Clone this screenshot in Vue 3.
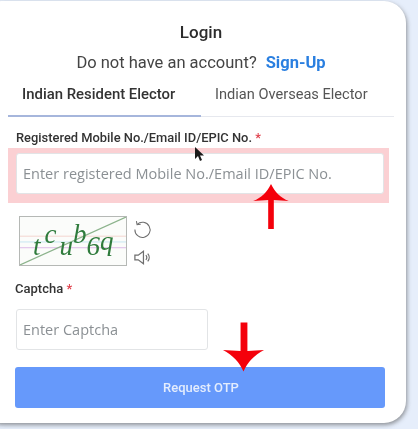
<script setup>
const captcha = [
  { ch: 't', cls: 'low gap-wide' },
  { ch: 'c', cls: 'high gap-mid' },
  { ch: 'u', cls: 'low' },
  { ch: 'b', cls: 'high' },
  { ch: '6', cls: 'low' },
  { ch: 'q', cls: 'mid' },
]
</script>

<template>
  <div class="page">
    <main class="card">
      <h1 class="title">Login</h1>
      <p class="signup">Do not have an account?<a class="link">Sign-Up</a></p>

      <div class="tabs">
        <div class="tab active">Indian Resident Elector</div>
        <div class="tab">Indian Overseas Elector</div>
      </div>

      <label class="label first">Registered Mobile No./Email ID/EPIC No. <span class="req">*</span></label>
      <div class="highlight">
        <div class="input wide">Enter registered Mobile No./Email ID/EPIC No.</div>
      </div>

      <div class="captcha-row">
        <div class="captcha">
          <svg class="captcha-lines" viewBox="0 0 108 50" preserveAspectRatio="none">
            <line x1="0" y1="20" x2="108" y2="20" stroke="#f3d4d0" />
            <line x1="0" y1="26" x2="108" y2="26" stroke="#c5e6f2" />
            <line x1="0" y1="32" x2="108" y2="32" stroke="#dcb9e6" />
            <line x1="0" y1="50" x2="108" y2="0" stroke="#8cb38c" stroke-width="1.2" />
          </svg>
          <span v-for="(l, i) in captcha" :key="i" class="glyph" :class="l.cls">{{ l.ch }}</span>
        </div>
        <div class="captcha-tools">
          <svg class="tool" viewBox="0 0 20 20" fill="none" stroke="#6e6e6e" stroke-width="1.1">
            <path d="M4.400 4.600A8 8 0 1 1 2 10" />
            <path d="M3.600 1.200 4.300 5l3.800-.5" />
          </svg>
          <svg class="tool" viewBox="0 0 20 20" fill="none" stroke="#6e6e6e" stroke-width="1.3">
            <path d="M2 7.500h3.500L11 3.500v13l-5.500-4H2z" />
            <path d="M13.500 7.500a3.500 3.500 0 0 1 0 5M15.500 6a6 6 0 0 1 0 8" />
          </svg>
        </div>
      </div>

      <label class="label second">Captcha <span class="req">*</span></label>
      <div class="input short">Enter Captcha</div>

      <button class="submit">Request OTP</button>
    </main>

    <svg class="pointer" viewBox="0 0 10 16">
      <path d="M1 1v12l3-3 2 5 2-1-2-4.500h4z" fill="#1a1a1a" />
    </svg>
    <svg class="arrow arrow-up" viewBox="0 0 40 48">
      <path d="M20 0 C24 8 30 15 39 18 L23 17 V48 H17 V17 L1 18 C10 15 16 8 20 0Z" fill="#f4000b" />
    </svg>
    <svg class="arrow arrow-down" viewBox="0 0 44 50">
      <path d="M19 0 H26 V29 L43 28 C33 33 26 41 22 50 C18 41 11 33 1 28 L19 29Z" fill="#f4000b" />
    </svg>
  </div>
</template>

<style>
html, body { margin: 0; background: #e6eefb; }
</style>

<style scoped>
.page {
  position: relative;
  width: 418px;
  height: 429px;
  overflow: hidden;
  background: #e6eefb;
  font-family: Roboto, "Liberation Sans", sans-serif;
}
.card {
  box-sizing: border-box;
  width: 426px;
  height: 422px;
  margin: 1px 0 0 -20px;
  padding: 22px 20px 0 35px;
  background: #fff;
  border-radius: 22px;
  box-shadow: 1px 2px 4px rgba(70, 70, 70, .55);
  filter: blur(.55px);
  display: flex;
  flex-direction: column;
  align-items: flex-start;
}
.title {
  width: 372px;
  margin: 0;
  text-align: center;
  font-size: 17px;
  line-height: 19px;
  font-weight: 500;
  color: #2c2c2c;
}
.signup {
  width: 372px;
  margin: 11px 0 0;
  text-align: center;
  font-size: 16.500px;
  line-height: 19px;
  color: #444;
}
.link { margin-left: 9px; color: #2a7fe0; font-weight: 700; }
.tabs {
  box-sizing: border-box;
  width: 386px;
  height: 39px;
  margin: 6px 0 0 -7px;
  display: flex;
  border-bottom: 1px solid #e6e8ee;
}
.tab {
  width: 193px;
  box-sizing: border-box;
  padding: 6px 0 0 14px;
  font-size: 14.600px;
  line-height: 20px;
  color: #555;
  white-space: nowrap;
}
.tab.active {
  height: 39px;
  font-size: 14.900px;
  color: #333;
  font-weight: 500;
  border-bottom: 2px solid #a6b6dc;
}
.label {
  font-size: 12.900px;
  line-height: 16px;
  font-weight: 500;
  color: #333;
  white-space: nowrap;
}
.label.first { margin: 13px 0 0 1px; }
.req { color: #e0404c; }
.highlight {
  box-sizing: border-box;
  width: 381px;
  height: 55px;
  margin: 2px 0 0 -7px;
  padding: 5px 5px 5px 8px;
  background: #fbd0d3;
}
.input {
  box-sizing: border-box;
  height: 41px;
  padding-left: 6px;
  display: flex;
  align-items: center;
  background: #fff;
  border: 1px solid #e2e4e6;
  border-radius: 3px;
  font-family: "Open Sans", sans-serif;
  font-size: 14.500px;
  color: #8b9094;
  white-space: nowrap;
}
.input.short { width: 192px; margin: 12px 0 0 1px; }
.captcha-row {
  display: flex;
  gap: 6px;
  margin: 13px 0 0 4px;
}
.captcha {
  position: relative;
  box-sizing: border-box;
  width: 108px;
  height: 50px;
  padding-left: 13px;
  border: 1px solid #b5b8b5;
  background: #fbfcfa;
  display: flex;
  font-family: "Liberation Serif", serif;
  font-style: italic;
  font-size: 27px;
  color: #2f7b3c;
}
.captcha-lines { position: absolute; inset: 0; width: 100%; height: 100%; }
.glyph { position: relative; line-height: 25px; }
.low { top: 17px; }
.mid { top: 12px; }
.high { top: 5px; }
.gap-wide { margin-right: 4px; }
.gap-mid { margin-right: 3px; }
.captcha-tools {
  display: flex;
  flex-direction: column;
  gap: 9px;
  padding-top: 4px;
}
.tool { width: 19px; height: 19px; }
.label.second { margin: 14px 0 0 0; font-size: 13px; }
.submit {
  width: 370px;
  height: 41px;
  margin: 17px 0 0 0;
  padding-left: 8px;
  border: 0;
  border-radius: 3px;
  background: #6699fb;
  color: #e4edfd;
  font-family: Roboto, sans-serif;
  font-size: 13px;
  font-weight: 500;
}
.pointer { position: absolute; left: 194px; top: 146px; width: 10px; height: 16px; }
.arrow { position: absolute; }
.arrow-up { left: 252px; top: 184px; width: 38px; height: 45px; }
.arrow-down { left: 222px; top: 322px; width: 43px; height: 50px; }
</style>
